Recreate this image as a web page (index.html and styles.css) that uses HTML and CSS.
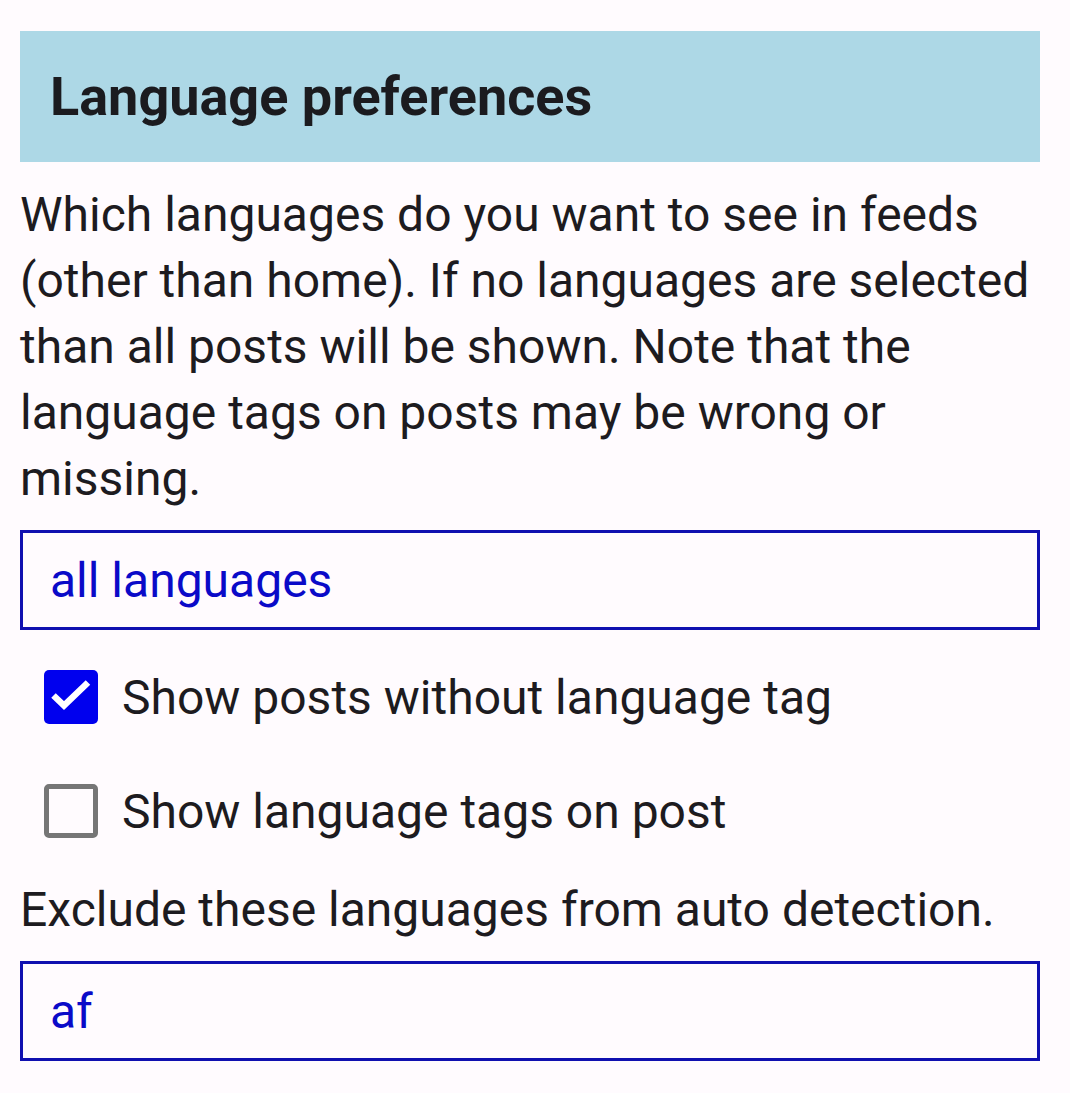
FILE: index.html
```html
<!DOCTYPE html>
<html lang="en">
<head>
<meta charset="utf-8">
<link rel="stylesheet" href="styles.css">
</head>
<body>
<div class="page">
  <div class="header"><h1 class="title">Language preferences</h1></div>
  <p class="desc">Which languages do you want to see in feeds (other than home). If no languages are selected than all posts will be shown. Note that the language tags on posts may be wrong or missing.</p>
  <div class="field"><span class="field-text">all languages</span></div>
  <div class="checks">
    <div class="check-row">
      <span class="box box-on">
        <svg viewBox="0 0 54 54" width="54" height="54"><path d="M9.5 25.5L20 35.5L44 12.5" fill="none" stroke="#fff" stroke-width="6.5"/></svg>
      </span>
      <span class="check-label">Show posts without language tag</span>
    </div>
    <div class="check-row">
      <span class="box box-off"></span>
      <span class="check-label">Show language tags on post</span>
    </div>
  </div>
  <p class="note">Exclude these languages from auto detection.</p>
  <div class="field field-last"><span class="field-text">af</span></div>
</div>
</body>
</html>
```

FILE: styles.css
```css
html, body {
  margin: 0;
  padding: 0;
  background: #fffbfe;
}
body {
  font-family: Roboto, "Noto Sans", sans-serif;
  color: #1d1b20;
}
.page {
  padding: 31px 30px 0 20px;
  display: flex;
  flex-direction: column;
}
.header {
  background: #add8e6;
  height: 131px;
  display: flex;
  align-items: center;
  padding-left: 30px;
}
.title {
  margin: 0;
  font-size: 54px;
  font-weight: 700;
  color: #1b1b1f;
}
.desc {
  margin: 20px 0 0 0;
  font-size: 48px;
  line-height: 66px;
}
.field {
  margin-top: 18px;
  height: 100px;
  box-sizing: border-box;
  border: 3px solid #1010b0;
  display: flex;
  align-items: center;
  padding-left: 27px;
}
.field-text {
  font-size: 48px;
  color: #0a0ac8;
}
.checks {
  display: flex;
  flex-direction: column;
  margin-top: 10px;
}
.check-row {
  display: flex;
  align-items: center;
  height: 114px;
  padding-left: 24px;
  gap: 24px;
}
.box {
  width: 54px;
  height: 54px;
  box-sizing: border-box;
  border-radius: 5px;
  display: flex;
  align-items: center;
  justify-content: center;
  overflow: hidden;
}
.box svg { display: block; }
.box-on { background: #0000ee; }
.box-off { border: 5px solid #767676; }
.check-label { font-size: 48px; }
.note {
  margin: 9px 0 0 0;
  font-size: 48px;
  line-height: 66px;
}
```
